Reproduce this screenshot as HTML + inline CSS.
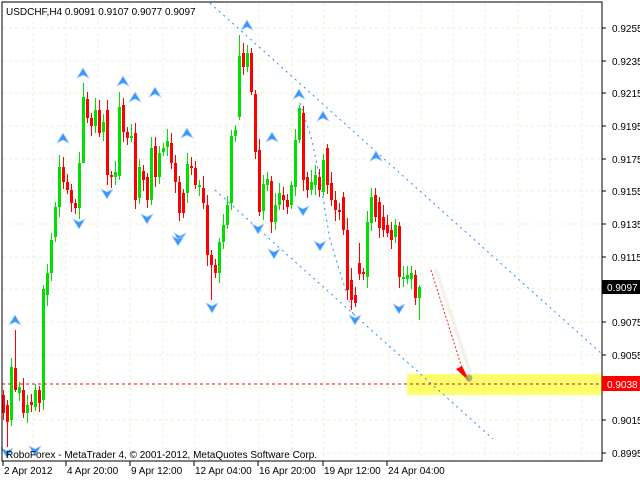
<!DOCTYPE html>
<html><head><meta charset="utf-8"><style>
html,body{margin:0;padding:0;background:#fff;width:640px;height:480px;overflow:hidden}
svg{display:block}
text{font-family:"Liberation Sans",sans-serif;font-size:10px;fill:#000}
</style></head><body>
<svg id="s" width="640" height="480" xmlns="http://www.w3.org/2000/svg">
<rect x="0" y="0" width="640" height="480" fill="#fff"/>
<g id="grid"></g>
<rect x="407" y="374" width="195" height="21" fill="#ffff55" opacity="0.85"/>
<g id="tl" stroke="#1e90ff" stroke-width="1" stroke-dasharray="2,4" fill="none">
<line x1="210" y1="3" x2="602" y2="354"/>
<line x1="215" y1="190" x2="493" y2="439"/>
<polyline points="300,103 312,140 320,180 330,240 354,317"/>
</g>
<g id="c"></g>
<g id="fr" fill="#3a96ff" stroke="#a8d0ff" stroke-width="0.7"></g>
<line x1="2" y1="384" x2="602" y2="384" stroke="#ff0000" stroke-dasharray="3,3"/>
<line x1="436" y1="270" x2="470" y2="372" stroke="#efefe4" stroke-width="4" stroke-linecap="round" opacity="0.7"/>
<line x1="431" y1="270" x2="462" y2="368" stroke="#ff2020" stroke-dasharray="2,2"/>
<path d="M456,369 L470,382 L462,366 Z" fill="#ff0000"/>
<circle cx="469" cy="378" r="3.5" fill="#a0a060" opacity="0.8"/>
<rect x="2" y="2" width="600" height="459" fill="none" stroke="#000"/>
<text x="6" y="15" font-size="10">USDCHF,H4  0.9091 0.9107 0.9077 0.9097</text>
<text x="6" y="458">RoboForex - MetaTrader 4, © 2001-2012, MetaQuotes Software Corp.</text>
<g id="ax"></g>
<rect x="602" y="280" width="38" height="14" fill="#000"/>
<text x="607" y="291" style="fill:#fff">0.9097</text>
<rect x="602" y="376" width="38" height="15" fill="#ff0000"/>
<text x="607" y="388" style="fill:#fff">0.9038</text>
</svg>
<script>
var NS="http://www.w3.org/2000/svg";
function el(p,t,a){var e=document.createElementNS(NS,t);for(var k in a)e.setAttribute(k,a[k]);p.appendChild(e);return e;}
var g=document.getElementById('grid'),ax=document.getElementById('ax');
var ys=[28,61,93,126,159,191,224,257,289,322,355,388,420,453];
var lab=["0.9255","0.9235","0.9215","0.9195","0.9175","0.9155","0.9135","0.9115","0.9095","0.9075","0.9055","0.9035","0.9015","0.8995"];
ys.forEach(function(y,i){el(g,'line',{x1:3,x2:601,y1:y,y2:y,stroke:'#efefd6','stroke-dasharray':'3,3'});
el(ax,'line',{x1:602,x2:606,y1:y,y2:y,stroke:'#000'});
if(i!=8&&i!=11){var t=el(ax,'text',{x:612,y:y+4});t.textContent=lab[i];}});
for(var k=1;k<19;k++){var x=Math.round(1+32.3*k);el(g,'line',{x1:x,x2:x,y1:3,y2:460,stroke:'#efefd6','stroke-dasharray':'3,3'});}
var d=[[3,"2 Apr 2012"],[66,"4 Apr 20:00"],[130,"9 Apr 12:00"],[194,"12 Apr 04:00"],[258,"16 Apr 20:00"],[323,"19 Apr 12:00"],[387,"24 Apr 04:00"]];
d.forEach(function(a){el(ax,'line',{x1:a[0],x2:a[0],y1:461,y2:466,stroke:'#000'});var t=el(ax,'text',{x:a[0]+1,y:474});t.textContent=a[1];});
var C=[[395,413],[405,422],[420,367],[368,390],[393,387],[390,413],[413,405],[402,405],[407,390],[390,403],[400,289],[295,273],[273,240],[237,207],[207,167],[167,182],[182,190],[190,203],[203,208],[208,163],[163,97],[99,118],[118,126],[126,110],[110,133],[132,122],[110,175],[175,177],[177,172],[176,107],[105,132],[132,138],[138,136],[133,200],[198,167],[171,180],[177,200],[200,148],[146,177],[177,153],[152,148],[147,141],[143,163],[163,182],[182,213],[193,213],[193,164],[166,168],[168,185],[187,185],[188,203],[205,255],[255,265],[265,273],[273,242],[242,225],[225,205],[203,136],[136,130],[117,56],[53,67],[67,53],[53,92],[94,152],[150,212],[211,184],[185,179],[181,222],[222,205],[205,193],[195,200],[200,207],[205,185],[187,140],[140,108],[113,180],[177,190],[190,182],[185,175],[177,190],[192,160],[148,185],[183,200],[200,210],[210,212],[197,230],[230,290],[280,300],[295,303],[263,274],[272,274],[277,222],[223,197],[195,217],[202,228],[217,230],[225,233],[230,240],[237,225],[226,277],[279,277],[279,275],[279,273],[275,298],[298,287]];
var W={1:[400,447],3:[330,392],20:[83,100],26:[100,185],29:[92,180],52:[250,300],59:[35,120],74:[105,143],89:[243,280],104:[285,320],57:[130,210],62:[48,95],87:[268,310],10:[285,410],0:[390,420]};
var cg=document.getElementById('c');
C.forEach(function(o,i){var x=3+4*i,t=Math.min(o[0],o[1]),b=Math.max(o[0],o[1]);
var hi=t-4-(i*7%9),lo=b+4+(i*5%8);if(W[i]){hi=W[i][0];lo=W[i][1];}
var col=o[1]<o[0]?'#00e000':'#ff0000';
el(cg,'line',{x1:x+0.5,x2:x+0.5,y1:hi,y2:lo,stroke:col});
el(cg,'rect',{x:x-1,y:t,width:3,height:Math.max(1,b-t),fill:col});});
var fr=document.getElementById('fr');
var up=[[15,321],[83,74],[123,82],[135,98],[155,93],[63,139],[187,134],[247,26],[299,95],[272,138],[323,117],[376,157]];
var dn=[[107,193],[79,223],[147,218],[180,237],[258,228],[303,210],[212,307],[274,253],[35,450],[7,452],[178,240],[355,319],[399,308],[320,245]];
up.forEach(function(p){el(fr,'path',{d:'M'+p[0]+','+(p[1]-6)+' l6,10 l-6,-3 l-6,3 z'});});
dn.forEach(function(p){el(fr,'path',{d:'M'+p[0]+','+(p[1]+6)+' l6,-10 l-6,3 l-6,-3 z'});});
</script>
</body></html>
